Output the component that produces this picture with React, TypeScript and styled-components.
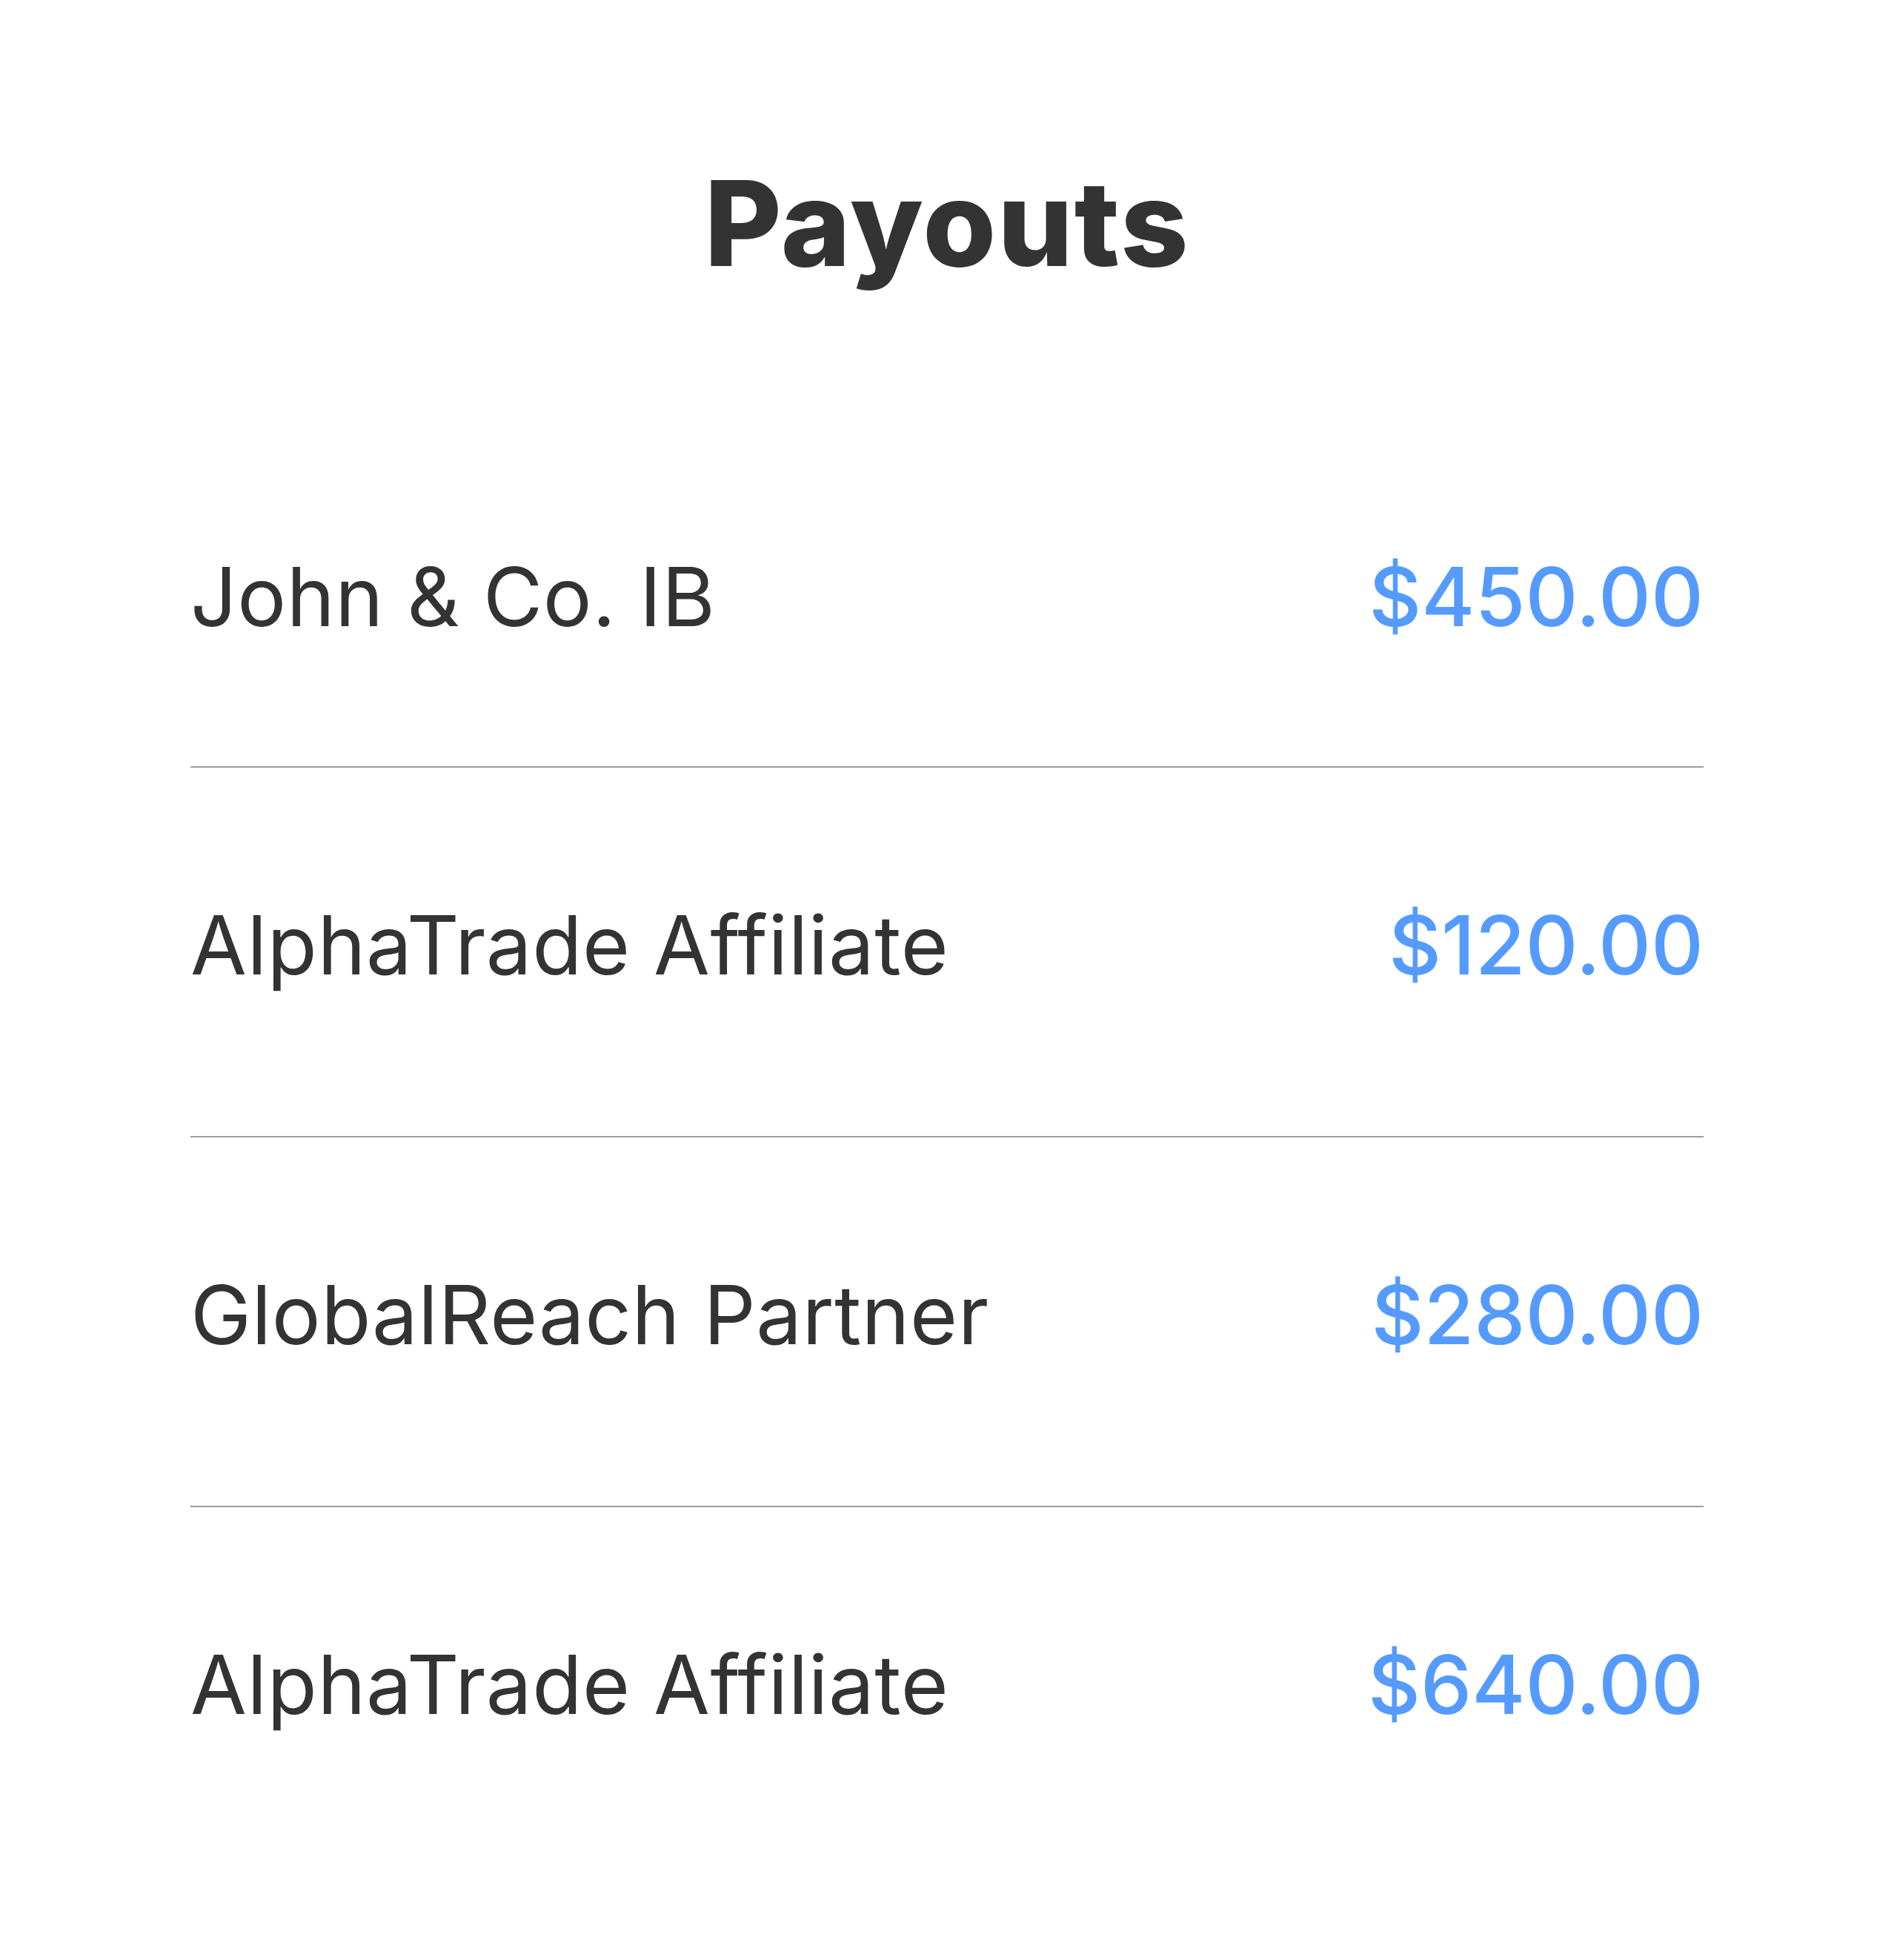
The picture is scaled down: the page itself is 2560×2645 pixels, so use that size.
import styled, { createGlobalStyle } from 'styled-components'

interface Payout {
  name: string
  amount: string
}

const payouts: Payout[] = [
  { name: 'John & Co. IB', amount: '$450.00' },
  { name: 'AlphaTrade Affiliate', amount: '$120.00' },
  { name: 'GlobalReach Partner', amount: '$280.00' },
  { name: 'AlphaTrade Affiliate', amount: '$640.00' },
]

const App = () => {
  return (
    <>
      <GlobalStyle />
      <Page>
        <Title>Payouts</Title>

        <List>
          {payouts.map((payout, index) => (
            <Row key={index}>
              <Name>{payout.name}</Name>
              <Amount>{payout.amount}</Amount>
            </Row>
          ))}
        </List>
      </Page>
    </>
  )
}

export default App

const GlobalStyle = createGlobalStyle`
  html, body {
    margin: 0;
    padding: 0;
    background: #ffffff;
  }

  body {
    font-family: Inter, 'Noto Sans', sans-serif;
    color: #333333;
  }
`

const Page = styled.div`
  display: flex;
  flex-direction: column;
  padding: 221px 261px 120px 257px;
`

const Title = styled.h1`
  margin: 0 0 369px;
  font-family: Inter, sans-serif;
  font-size: 160px;
  font-weight: 800;
  line-height: 1;
  letter-spacing: 2px;
  text-align: center;
  color: #333333;
`

const List = styled.div`
  display: flex;
  flex-direction: column;
`

const Row = styled.div`
  display: flex;
  justify-content: space-between;
  align-items: center;
  padding: 184px 0 203px;

  &:first-child {
    padding: 0 0 174px;
  }

  & + & {
    border-top: 2px solid #9e9e9e;
  }
`

const Name = styled.span`
  font-size: 110px;
  font-weight: 400;
  line-height: 1;
  letter-spacing: 0.5px;
  color: #333333;
`

const Amount = styled.span`
  font-size: 110px;
  font-weight: 500;
  line-height: 1;
  color: #559bff;
`
